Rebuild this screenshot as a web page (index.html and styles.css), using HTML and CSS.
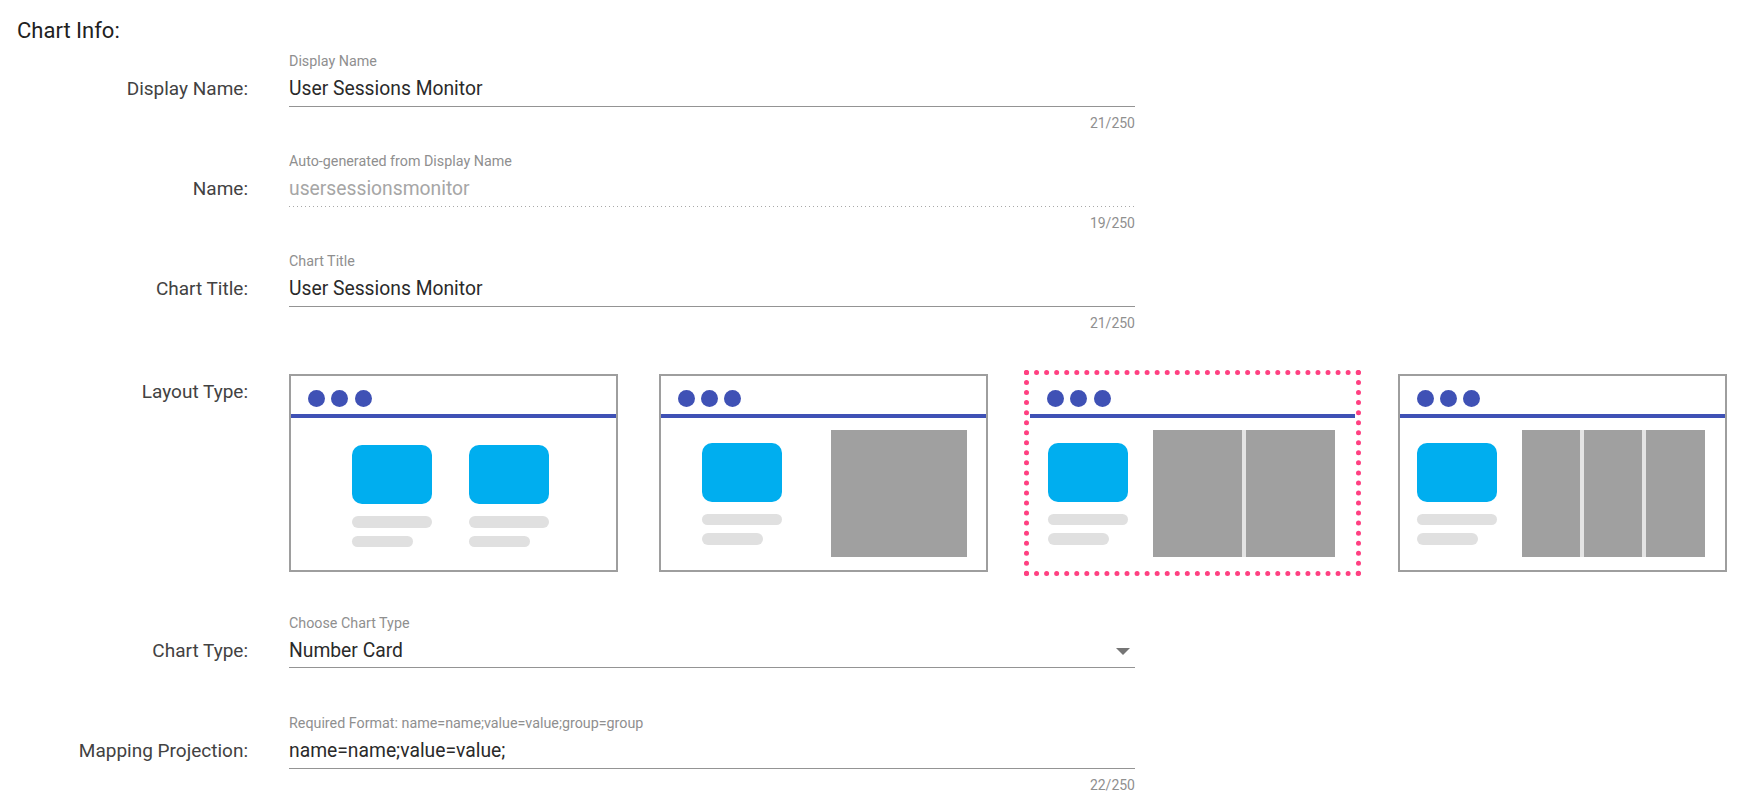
FILE: index.html
```html
<!DOCTYPE html>
<html>
<head>
<meta charset="utf-8">
<link rel="stylesheet" href="styles.css">
</head>
<body>
<div class="page">
  <h2 class="title">Chart Info:</h2>

  <div class="row">
    <div class="row-label">Display Name:</div>
    <div class="field">
      <div class="hint">Display Name</div>
      <div class="input">User Sessions Monitor</div>
      <div class="counter">21/250</div>
    </div>
  </div>

  <div class="row">
    <div class="row-label">Name:</div>
    <div class="field">
      <div class="hint">Auto-generated from Display Name</div>
      <div class="input disabled">usersessionsmonitor</div>
      <div class="counter">19/250</div>
    </div>
  </div>

  <div class="row">
    <div class="row-label">Chart Title:</div>
    <div class="field">
      <div class="hint">Chart Title</div>
      <div class="input">User Sessions Monitor</div>
      <div class="counter">21/250</div>
    </div>
  </div>

  <div class="row layout-row">
    <div class="row-label layout-label">Layout Type:</div>
    <div class="cards">
      <div class="card">
        <div class="card-head"><span class="dot"></span><span class="dot"></span><span class="dot"></span></div>
        <div class="card-body body-two">
          <div class="tile"><div class="tile-box"></div><div class="bar"></div><div class="bar short"></div></div>
          <div class="tile"><div class="tile-box"></div><div class="bar"></div><div class="bar short"></div></div>
        </div>
      </div>
      <div class="card">
        <div class="card-head"><span class="dot"></span><span class="dot"></span><span class="dot"></span></div>
        <div class="card-body body-one">
          <div class="tile"><div class="tile-box"></div><div class="bar"></div><div class="bar short"></div></div>
          <div class="panels panels-one"><div class="panel"></div></div>
        </div>
      </div>
      <div class="card selected">
        <div class="card-head"><span class="dot"></span><span class="dot"></span><span class="dot"></span></div>
        <div class="card-body body-multi">
          <div class="tile"><div class="tile-box"></div><div class="bar"></div><div class="bar short"></div></div>
          <div class="panels"><div class="panel"></div><div class="panel"></div></div>
        </div>
      </div>
      <div class="card">
        <div class="card-head"><span class="dot"></span><span class="dot"></span><span class="dot"></span></div>
        <div class="card-body body-multi">
          <div class="tile"><div class="tile-box"></div><div class="bar"></div><div class="bar short"></div></div>
          <div class="panels"><div class="panel"></div><div class="panel"></div><div class="panel"></div></div>
        </div>
      </div>
    </div>
  </div>

  <div class="row select-row">
    <div class="row-label">Chart Type:</div>
    <div class="field">
      <div class="hint">Choose Chart Type</div>
      <div class="input select"><span>Number Card</span><span class="caret"></span></div>
    </div>
  </div>

  <div class="row">
    <div class="row-label">Mapping Projection:</div>
    <div class="field">
      <div class="hint">Required Format: name=name;value=value;group=group</div>
      <div class="input">name=name;value=value;</div>
      <div class="counter">22/250</div>
    </div>
  </div>
</div>
</body>
</html>
```

FILE: styles.css
```css
* { box-sizing: border-box; }

html, body {
  margin: 0;
  padding: 0;
  background: #ffffff;
}

body {
  font-family: Roboto, "Liberation Sans", Arial, sans-serif;
  color: rgba(0, 0, 0, 0.87);
}

.page {
  padding-top: 18px;
}

.title {
  margin: 0 0 8px 17px;
  font-size: 22px;
  line-height: 26px;
  font-weight: 400;
  color: #212121;
}

.row {
  display: flex;
  align-items: flex-start;
  gap: 41px;
  margin-bottom: 20px;
}

.row-label {
  width: 248px;
  flex: 0 0 248px;
  margin-top: 24px;
  text-align: right;
  font-size: 19px;
  line-height: 26px;
  color: #424242;
}

.field {
  width: 846px;
  display: flex;
  flex-direction: column;
}

.hint {
  font-size: 14.3px;
  line-height: 18px;
  color: #8f8f8f;
  margin-bottom: 6px;
}

.input {
  font-size: 19.3px;
  line-height: 26px;
  color: #2a2a2a;
  padding-bottom: 4px;
  border-bottom: 1px solid #949494;
}

.input.disabled {
  color: #a6a6a6;
  border-bottom: none;
  padding-bottom: 5px;
  background-image: linear-gradient(to right, #a8a8a8 0, #a8a8a8 34%, transparent 34%);
  background-size: 4px 1px;
  background-repeat: repeat-x;
  background-position: 0 bottom;
}

.counter {
  margin-top: 7px;
  text-align: right;
  font-size: 14px;
  line-height: 18px;
  color: #8f8f8f;
}

/* Layout type */
.layout-row {
  margin-top: 42px;
  margin-bottom: 42px;
}

.layout-label {
  margin-top: 5px;
}

.cards {
  display: flex;
  gap: 40.5px;
}

.card {
  width: 329px;
  height: 198px;
  border: 2px solid #9e9e9e;
  background: #fff;
  display: flex;
  flex-direction: column;
}

.card.selected {
  border-color: transparent;
  outline: 5px dotted #ff4081;
  outline-offset: -1px;
}

.card-head {
  height: 41.5px;
  flex: 0 0 41.5px;
  padding: 13.5px 0 0 17px;
  display: flex;
  gap: 6.3px;
  border-bottom: 4px solid #3f51b5;
}

.dot {
  width: 17px;
  height: 17px;
  border-radius: 50%;
  background: #3f51b5;
}

.card-body {
  flex: 1;
  display: flex;
  align-items: center;
}

.tile {
  width: 80px;
  display: flex;
  flex-direction: column;
}

.tile-box {
  height: 59px;
  border-radius: 10px;
  background: #00aeef;
  margin-bottom: 12px;
}

.bar {
  height: 11.7px;
  width: 80px;
  border-radius: 6px;
  background: #e0e0e0;
}

.bar.short {
  width: 61px;
  margin-top: 8px;
}

.body-two {
  padding: 5px 0 0 60.7px;
  gap: 37.7px;
}

.body-one {
  padding-left: 41.4px;
  gap: 49.3px;
}

.body-multi {
  padding-left: 17.5px;
  gap: 25px;
}

.panels {
  width: 182.5px;
  height: 126.7px;
  display: flex;
  gap: 4px;
  background: #e4e4e4;
}

.panels-one {
  width: 136px;
}

.panel {
  flex: 1;
  background: #a0a0a0;
}

/* Select */
.select-row {
  margin-bottom: 46px;
}

.input.select {
  display: flex;
  justify-content: space-between;
  align-items: center;
  padding-bottom: 3px;
}

.caret {
  width: 0;
  height: 0;
  margin-right: 5px;
  border-left: 7px solid transparent;
  border-right: 7px solid transparent;
  border-top: 7px solid #757575;
}
```
